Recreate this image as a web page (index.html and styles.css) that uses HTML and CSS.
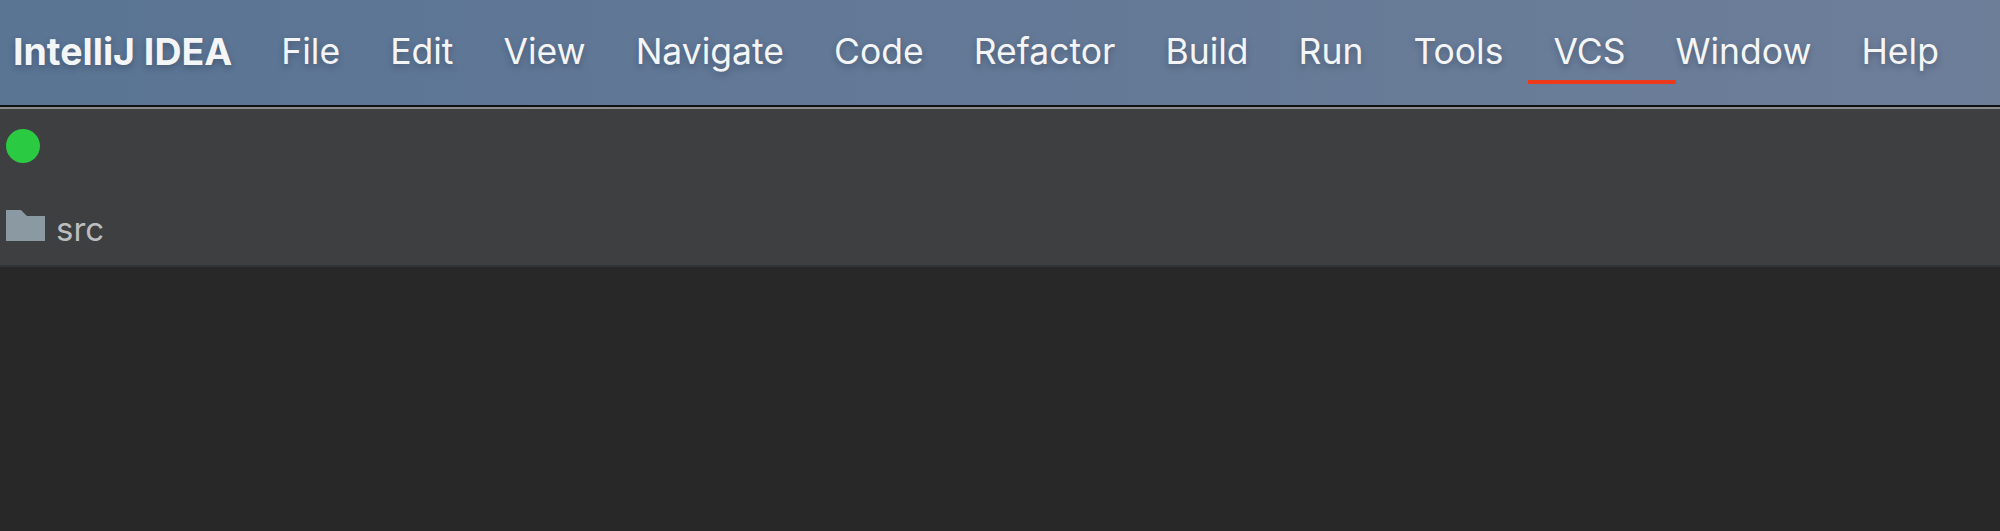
FILE: index.html
```html
<!DOCTYPE html>
<html lang="en">
<head>
    <meta charset="UTF-8">
    <title>IntelliJ IDEA</title>
    <link rel="stylesheet" href="styles.css">
</head>
<body>
    <ul class="menubar">
        <li class="app-name">IntelliJ IDEA</li>
        <li>File</li>
        <li>Edit</li>
        <li>View</li>
        <li>Navigate</li>
        <li>Code</li>
        <li>Refactor</li>
        <li>Build</li>
        <li>Run</li>
        <li>Tools</li>
        <li class="marked">VCS</li>
        <li>Window</li>
        <li>Help</li>
    </ul>
    <div class="toolbar">
        <div class="status-row">
            <span class="dot"></span>
        </div>
        <div class="crumb-row">
            <svg class="folder" width="39" height="31" viewBox="0 0 39 31">
                <path d="M0 0H15L21 6H39V31H0Z" fill="#8a99a2"/>
            </svg>
            <span class="crumb">src</span>
        </div>
    </div>
    <div class="editor"></div>
</body>
</html>
```

FILE: styles.css
```css
html, body {
    margin: 0;
    height: 100%;
}
body {
    display: flex;
    flex-direction: column;
    background-color: #282828;
    font-family: Inter, "Liberation Sans", sans-serif;
    overflow: hidden;
}
.menubar {
    display: flex;
    align-items: center;
    gap: 50px;
    height: 107px;
    margin: 0;
    padding: 0 0 2px 13px;
    box-sizing: border-box;
    list-style: none;
    background: linear-gradient(90deg, #5a7494, #6d7e99);
    border-bottom: 2px solid #111;
    font-size: 35.5px;
    color: #f4f5f7;
    text-shadow: 0 3px 6px rgba(30, 40, 60, 0.35);
}
.app-name {
    margin-right: -1px;
    font-size: 37.5px;
    font-weight: 700;
}
.marked {
    position: relative;
}
/* 红色下划线 */
.marked::after {
    content: "";
    position: absolute;
    left: -25px;
    top: 50px;
    width: 148px;
    height: 4px;
    background-color: #ee3a1c;
}
.toolbar {
    display: flex;
    flex-direction: column;
    height: 160px;
    box-sizing: border-box;
    background-color: #3e3f41;
    border-top: 2px solid #8b8c8d;
    border-bottom: 2px solid #333435;
    padding-left: 6px;
}
.status-row {
    display: flex;
    align-items: center;
    height: 73px;
}
.dot {
    width: 34px;
    height: 34px;
    border-radius: 50%;
    background-color: #2acb42;
}
.crumb-row {
    display: flex;
    align-items: baseline;
    gap: 11px;
    padding-top: 27px;
}
.crumb {
    font-size: 33px;
    color: #bcbdbe;
}
.editor {
    flex: 1;
    background-color: #282828;
}
```
